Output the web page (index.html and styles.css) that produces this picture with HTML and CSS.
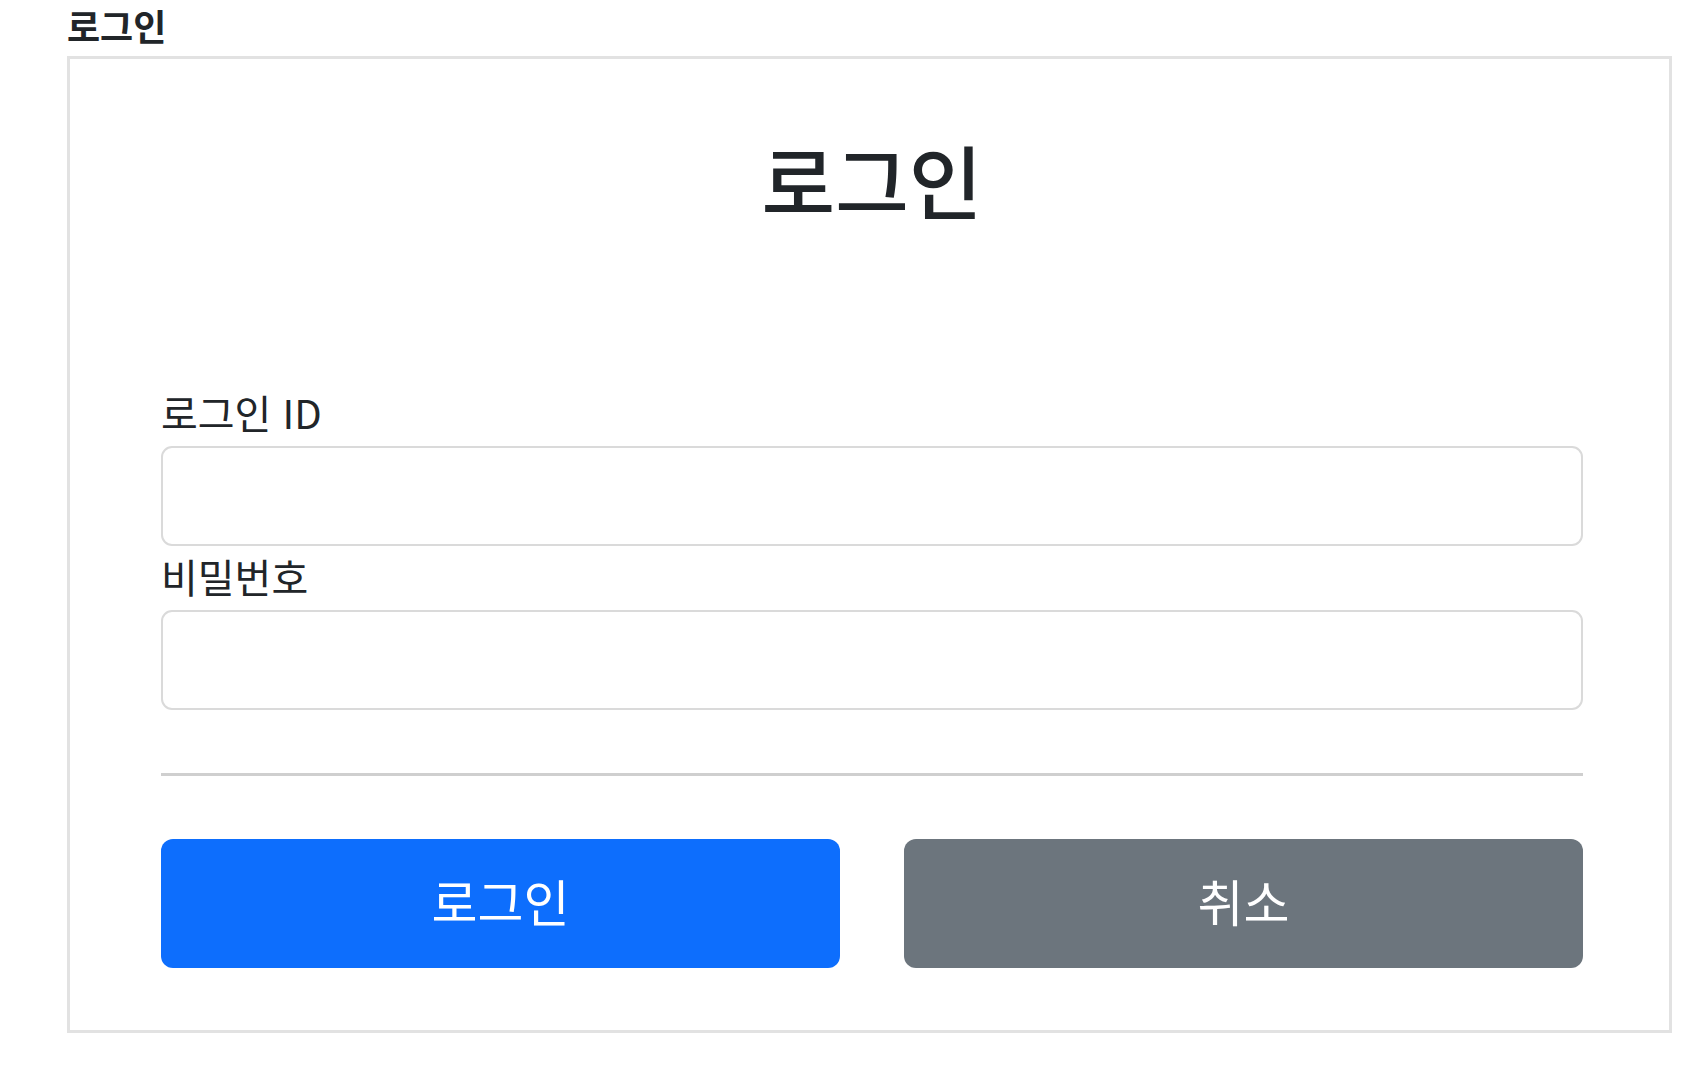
FILE: index.html
```html
<!DOCTYPE html>
<html lang="ko">
<head>
<meta charset="utf-8">
<title>로그인</title>
<link rel="stylesheet" href="styles.css">
</head>
<body>
<h2 class="page-title">로그인</h2>
<div class="card">
  <div class="content">
    <h1 class="title">로그인</h1>
    <form class="form">
      <label class="label" for="loginId">로그인 ID</label>
      <input class="input" id="loginId" type="text">
      <label class="label" for="password">비밀번호</label>
      <input class="input" id="password" type="password">
      <hr class="divider">
      <div class="actions">
        <button class="btn btn-primary" type="submit">로그인</button>
        <button class="btn btn-secondary" type="button">취소</button>
      </div>
    </form>
  </div>
</div>
</body>
</html>
```

FILE: styles.css
```css
* { box-sizing: border-box; }

html, body {
  margin: 0;
  padding: 0;
  background: #ffffff;
}

body {
  padding-left: 67px;
  font-family: "Noto Sans CJK KR", "Noto Sans", sans-serif;
  color: #212529;
}

.page-title {
  margin: 0;
  height: 56px;
  font-size: 36px;
  line-height: 50px;
  font-weight: 700;
}

.card {
  width: 1605px;
  border: 3px solid #e2e2e2;
  padding: 0 86px 62px 91px;
}

.title {
  margin: 69px 0 0;
  height: 100px;
  font-size: 80px;
  line-height: 100px;
  font-weight: 500;
  text-align: center;
}

.form {
  display: flex;
  flex-direction: column;
  margin-top: 164px;
}

.label {
  display: block;
  height: 44px;
  font-size: 40px;
  line-height: 40px;
  margin-bottom: 10px;
}

.input {
  display: block;
  width: 100%;
  height: 100px;
  border: 2px solid #dadada;
  border-radius: 11px;
  background: #fff;
  margin: 0 0 10px;
  outline: none;
}

.divider {
  margin: 53px 0 0;
  border: 0;
  border-top: 3px solid #cfcfcf;
}

.actions {
  display: flex;
  gap: 64px;
  margin-top: 63px;
}

.btn {
  flex: 1;
  height: 129px;
  padding: 0 0 8px;
  border: 0;
  border-radius: 12px;
  font-family: "Noto Sans CJK KR", "Noto Sans", sans-serif;
  font-size: 50px;
  color: #ffffff;
  cursor: pointer;
}

.btn-primary { background: #0d6efd; }
.btn-secondary { background: #6c757d; }
```
